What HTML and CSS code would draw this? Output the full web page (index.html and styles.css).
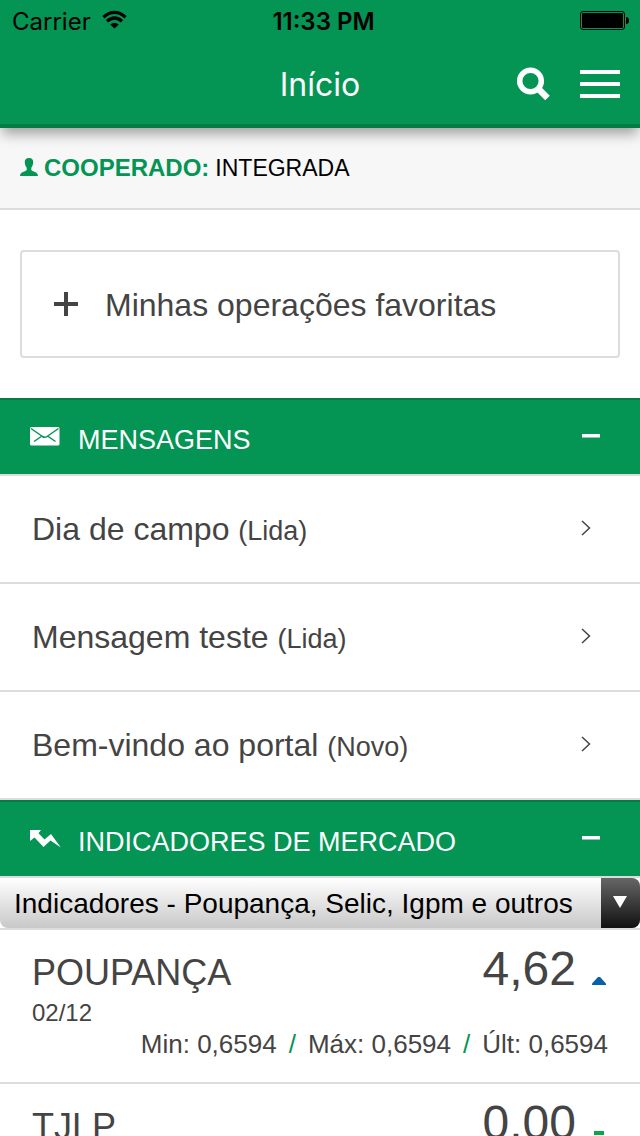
FILE: index.html
```html
<!DOCTYPE html>
<html lang="pt-BR">
<head>
<meta charset="utf-8">
<meta name="viewport" content="width=device-width">
<title>Início</title>
<link rel="stylesheet" href="styles.css">
</head>
<body>
<div class="app">
  <header class="top">
    <div class="status">
      <div class="carrier"><span>Carrier</span>
        <svg width="25" height="19" viewBox="0 0 25 19" aria-hidden="true"><g fill="none" stroke="#000" stroke-width="3.2"><path d="M1.4 7.2Q12.5 -2.4 23.6 7.2"/><path d="M5 11.3Q12.5 4.7 20 11.3"/></g><path d="M8.2 14.4Q12.5 11 16.8 14.4L12.5 18.5Z"/></svg>
      </div>
      <time class="clock">11:33 PM</time>
      <svg class="battery" width="49" height="19" viewBox="0 0 49 19" aria-hidden="true"><rect x=".5" y=".5" width="44" height="18" rx="2.500" fill="none" stroke="#000"/><rect x="2" y="2" width="41" height="15" rx="1"/><path d="M46 6Q49 6 49 9.500T46 13Z"/></svg>
    </div>
    <div class="nav">
      <h1 class="title">Início</h1>
      <div class="actions">
        <button class="icon-btn" type="button" aria-label="Buscar"><svg width="34" height="34" viewBox="0 0 34 34"><circle cx="14.500" cy="14" r="10.800" fill="none" stroke="#fff" stroke-width="5.500"/><path d="M22.500 22L31.500 31" stroke="#fff" stroke-width="6.500"/></svg></button>
        <button class="icon-btn" type="button" aria-label="Menu"><svg width="40" height="28" viewBox="0 0 40 28"><path d="M0 0H40V4H0ZM0 12H40V16H0ZM0 24H40V28H0Z" fill="#fff"/></svg></button>
      </div>
    </div>
  </header>
  <main class="content">
    <div class="member">
      <svg width="18" height="18" viewBox="0 0 18 18" aria-hidden="true"><path d="M9 0C12 0 13.400 1.700 13.200 4.500C13.100 7 12.200 8.600 11.300 9.700V12C12 13.700 18 13.500 18 18H0C0 13.500 6 13.700 6.700 12V9.700C5.800 8.600 4.900 7 4.800 4.500C4.600 1.700 6 0 9 0Z" fill="#049454"/></svg>
      <strong class="member-label">COOPERADO:</strong>
      <span class="member-name">INTEGRADA</span>
    </div>
    <button class="favorites" type="button">
      <svg width="24" height="24" viewBox="0 0 24 24" aria-hidden="true"><path d="M0 10H10V0H14V10H24V14H14V24H10V14H0Z" fill="#444"/></svg>
      <span>Minhas operações favoritas</span>
    </button>
    <section>
      <h2 class="section-title"><button class="toggle" type="button" aria-expanded="true">
        <svg width="32" height="20" viewBox="0 0 32 20" aria-hidden="true"><rect y="1" width="29.500" height="18.500" rx="1.500" fill="#fff"/><path d="M1 2.500L12.500 10.500Q14.800 12 17 10.500L28.500 2.500M4 15.500L12 10M25.500 15.500L17.500 10" fill="none" stroke="#049454" stroke-width="1.500"/></svg>
        <span class="toggle-text">MENSAGENS</span>
        <svg width="18" height="4" viewBox="0 0 18 4" aria-hidden="true"><path d="M0 0H18V3.500H0Z" fill="#fff"/></svg>
      </button></h2>
      <ul class="messages">
        <li><a class="message" href="#dia-de-campo"><span>Dia de campo <small>(Lida)</small></span><svg width="12" height="16" viewBox="0 0 12 16" aria-hidden="true"><path d="M2 1L9.500 8L2 15" fill="none" stroke="#444" stroke-width="1.500"/></svg></a></li>
        <li><a class="message" href="#mensagem-teste"><span>Mensagem teste <small>(Lida)</small></span><svg width="12" height="16" viewBox="0 0 12 16" aria-hidden="true"><path d="M2 1L9.500 8L2 15" fill="none" stroke="#444" stroke-width="1.500"/></svg></a></li>
        <li><a class="message" href="#bem-vindo"><span>Bem-vindo ao portal <small>(Novo)</small></span><svg width="12" height="16" viewBox="0 0 12 16" aria-hidden="true"><path d="M2 1L9.500 8L2 15" fill="none" stroke="#444" stroke-width="1.500"/></svg></a></li>
      </ul>
    </section>
    <section>
      <h2 class="section-title"><button class="toggle" type="button" aria-expanded="true">
        <svg width="32" height="20" viewBox="0 0 32 20" aria-hidden="true"><path d="M0 2H11L8.500 5.200L14.500 11.500L21 6L30.800 19.500L20.500 12.500L13.500 19L4.500 9.500L0 13Z" fill="#fff"/></svg>
        <span class="toggle-text">INDICADORES DE MERCADO</span>
        <svg width="18" height="4" viewBox="0 0 18 4" aria-hidden="true"><path d="M0 0H18V3.500H0Z" fill="#fff"/></svg>
      </button></h2>
      <div class="picker">
        <select class="picker-select" aria-label="Grupo de indicadores"><option>Indicadores - Poupança, Selic, Igpm e outros</option></select>
        <span class="picker-arrow"><svg width="14" height="12" viewBox="0 0 14 12" aria-hidden="true"><path d="M0 0H14L7 12Z" fill="#fff"/></svg></span>
      </div>
      <article class="indicator">
        <div class="summary">
          <h3 class="indicator-name">POUPANÇA</h3>
          <span class="value">4,62</span>
          <svg width="14" height="8" viewBox="0 0 14 8" role="img" aria-label="Alta"><path d="M0 8V6.500L6 0H8L14 6.500V8Z" fill="#0860a8"/></svg>
        </div>
        <div class="date">02/12</div>
        <div class="details"><span>Min: 0,6594</span><i class="slash">/</i><span>Máx: 0,6594</span><i class="slash">/</i><span>Últ: 0,6594</span></div>
      </article>
      <article class="indicator">
        <div class="summary">
          <h3 class="indicator-name">TJLP</h3>
          <span class="value">0,00</span>
          <svg width="14" height="8" viewBox="0 0 14 8" role="img" aria-label="Estável"><path d="M2 0H12V4H2Z" fill="#08a848"/><path d="M2 5H12V6H2Z" fill="#fbdcdc"/></svg>
        </div>
      </article>
    </section>
  </main>
</div>
</body>
</html>
```
FILE: styles.css
```css
* { box-sizing: border-box; }
body { margin: 0; background: #fff; color: #444; font-family: "Liberation Sans", Arial, sans-serif; }
h1, h2, h3, ul { margin: 0; padding: 0; font-weight: 400; }
ul { list-style: none; }
button { border: 0; padding: 0; font: inherit; background: none; text-align: left; cursor: pointer; }
svg { display: block; flex: none; }

.app { display: flex; flex-direction: column; height: 100vh; overflow: hidden; }
.top { position: relative; z-index: 1; flex: none; background: #049454; border-bottom: 4px solid #047c44; box-shadow: 0 8px 12px -2px rgba(0, 0, 0, .35); font-family: Inter, sans-serif; }
.status { display: grid; grid-template-columns: 1fr auto 1fr; align-items: center; height: 40px; padding: 0 11px 0 12px; color: #000; font-size: 24px; }
.carrier { display: flex; align-items: center; gap: 11px; padding-top: 2px; }
.carrier svg { margin-bottom: 4px; }
.clock { padding: 2px 0 0 6px; font-weight: 600; }
.battery { justify-self: end; }
.nav { display: grid; grid-template-columns: 1fr auto 1fr; align-items: center; height: 84px; padding: 4px 20px 0; color: #fff; }
.title { grid-column: 2; font-size: 32px; }
.actions { display: flex; justify-content: flex-end; align-items: center; gap: 30px; }

.content { flex: 1; min-height: 0; overflow-y: auto; scrollbar-width: none; }
.member { display: flex; align-items: center; gap: 6px; height: 82px; border-bottom: 2px solid #dcdcdc; padding: 0 20px; background: #f7f7f7; font-size: 24px; }
.member svg { margin-bottom: 2px; }
.member-label { color: #049454; }
.member-name { color: #000; font-size: 23px; }
.favorites { display: flex; align-items: center; gap: 27px; width: calc(100% - 40px); height: 108px; margin: 40px 20px; padding: 0 32px; border: 2px solid #dcdcdc; border-radius: 4px; color: #444; font-size: 32px; }
.favorites span { padding-top: 2px; }

.section-title { border-bottom: 2px solid #dcdcdc; }
.toggle { display: flex; align-items: center; gap: 16px; width: 100%; height: 76px; padding: 0 40px 0 30px; background: #049454; border-top: 2px solid #047c44; color: #fff; font-size: 27px; }
.toggle svg { margin-bottom: 3px; }
.toggle-text { flex: 1; padding-top: 6px; }
.message { display: flex; align-items: center; justify-content: space-between; height: 108px; padding: 0 48px 0 32px; border-bottom: 2px solid #dcdcdc; color: #444; font-size: 32px; text-decoration: none; }
.message svg { margin-bottom: 2px; }
.message small { font-size: 27px; }

.picker { display: grid; border-bottom: 2px solid #dcdcdc; }
.picker-select { grid-area: 1 / 1; width: 100%; height: 50px; margin: 0; padding: 0 48px 0 14px; appearance: none; border: 0; border-radius: 0 8px 8px 8px; background: linear-gradient(#fff, #c8c8c8); color: #000; font: 28px "Liberation Sans", Arial, sans-serif; }
.picker-arrow { grid-area: 1 / 1; justify-self: end; display: flex; align-items: center; width: 39px; padding: 0 12px 2px; border-radius: 0 8px 8px 0; background: linear-gradient(#666, #111); pointer-events: none; }

.indicator { padding: 15px 32px 22px; border-bottom: 2px solid #dcdcdc; }
.summary { display: flex; align-items: baseline; gap: 16px; padding-right: 2px; }
.indicator-name { flex: 1; font-size: 36px; line-height: 48px; }
.value { font-size: 48px; line-height: 48px; }
.date { font-size: 24px; line-height: 31px; }
.details { display: flex; justify-content: flex-end; gap: 12px; font-size: 26px; line-height: 32px; }
.slash { color: #049454; font-style: normal; }
```
